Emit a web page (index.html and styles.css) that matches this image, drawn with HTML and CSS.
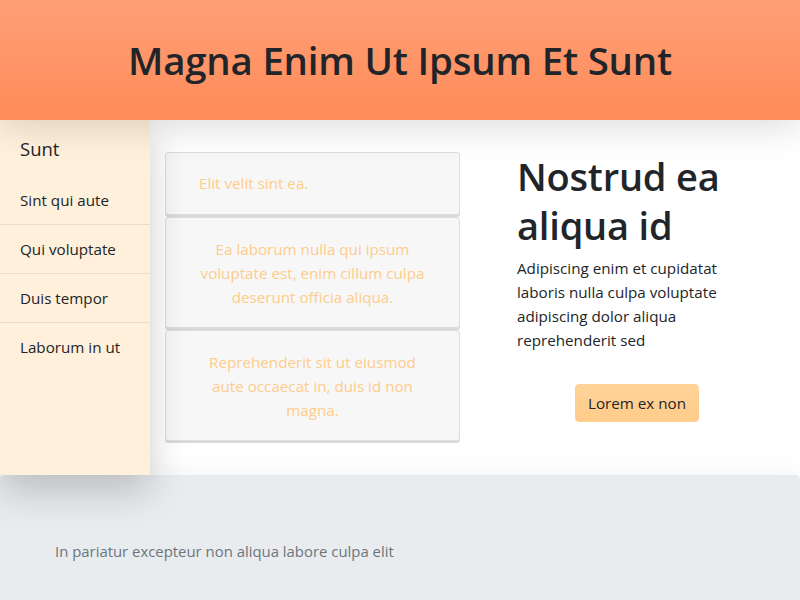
FILE: index.html
```html
<!DOCTYPE html>
<html lang="en">
<head>
<meta charset="utf-8">
<title>Magna Enim Ut Ipsum Et Sunt</title>
<link rel="stylesheet" href="styles.css">
</head>
<body>
<header class="top">
  <h1 class="top-title">Magna Enim Ut Ipsum Et Sunt</h1>
</header>
<div class="middle">
  <nav class="side">
    <div class="side-title">Sunt</div>
    <a class="side-item">Sint qui aute</a>
    <a class="side-item">Qui voluptate</a>
    <a class="side-item">Duis tempor</a>
    <a class="side-item">Laborum in ut</a>
  </nav>
  <main class="main">
    <div class="cards">
      <div class="card card-left">Elit velit sint ea.</div>
      <div class="card">Ea laborum nulla qui ipsum voluptate est, enim cillum culpa deserunt officia aliqua.</div>
      <div class="card">Reprehenderit sit ut eiusmod aute occaecat in, duis id non magna.</div>
    </div>
    <section class="hero">
      <h2 class="hero-title">Nostrud ea aliqua id</h2>
      <p class="hero-text">Adipiscing enim et cupidatat laboris nulla culpa voluptate adipiscing dolor aliqua reprehenderit sed</p>
      <div class="hero-actions"><button class="btn">Lorem ex non</button></div>
    </section>
  </main>
</div>
<footer class="foot">
  <p class="foot-text">In pariatur excepteur non aliqua labore culpa elit</p>
</footer>
</body>
</html>
```

FILE: styles.css
```css
html, body {
  margin: 0;
  padding: 0;
}
body {
  font-family: "Open Sans", "Liberation Sans", sans-serif;
  font-size: 15px;
  line-height: 24px;
  color: #212529;
  background: #ffffff;
  width: 800px;
  height: 600px;
  overflow: hidden;
}
.top {
  position: relative;
  z-index: 3;
  height: 120px;
  display: flex;
  align-items: center;
  justify-content: center;
  background: linear-gradient(180deg, #fe9f76 0%, #ff8b59 100%);
  box-shadow: 0 4px 36px rgba(0, 0, 0, 0.16);
}
.top-title {
  margin: 0;
  font-size: 38.4px;
  font-weight: 600;
  line-height: 48px;
  letter-spacing: -0.2px;
  color: #212529;
}
.middle {
  display: flex;
  height: 355px;
}
.side {
  position: relative;
  z-index: 2;
  width: 150px;
  flex: none;
  background: #fff0dc;
  box-shadow: 0 16px 36px rgba(0, 0, 0, 0.2);
  padding-top: 16px;
  box-sizing: border-box;
}
.side-title {
  font-size: 18.5px;
  line-height: 26px;
  padding: 0 20px;
  margin-bottom: 14px;
}
.side-item {
  display: block;
  padding: 12px 20px 12px;
  font-size: 15.2px;
  line-height: 24px;
  border-bottom: 1px solid #e6dccf;
  color: #212529;
}
.side-item:last-child {
  border-bottom: none;
}
.main {
  flex: 1;
  display: flex;
  background: #ffffff;
  padding: 32px 0 0 15px;
  box-sizing: border-box;
}
.cards {
  width: 295px;
  flex: none;
  display: flex;
  flex-direction: column;
  gap: 2px;
}
.card {
  background: #f7f7f7;
  border: 1px solid #dddddd;
  border-radius: 3px;
  box-shadow: 0 2px 0 #d9d9d9;
  padding: 19px 32px 18px;
  text-align: center;
  color: #fecc8b;
  font-size: 15.2px;
  line-height: 24px;
}
.card-left {
  text-align: left;
  padding: 18px 32px 19px 33px;
}
.hero {
  width: 240px;
  flex: none;
  padding: 0 0 0 57px;
}
.hero-title {
  margin: 0 0 6px;
  font-size: 38px;
  font-weight: 600;
  line-height: 49px;
  letter-spacing: -0.2px;
}
.hero-text {
  margin: 0;
  font-size: 15.2px;
  line-height: 24px;
}
.hero-actions {
  display: flex;
  justify-content: center;
  margin-top: 32px;
}
.btn {
  font-family: inherit;
  font-size: 15.2px;
  line-height: 24px;
  color: #212529;
  background: linear-gradient(180deg, #ffd398 0%, #ffcc8a 100%);
  border: 1px solid #fdcf93;
  border-radius: 4px;
  padding: 6px 12px;
}
.foot {
  position: relative;
  z-index: 1;
  height: 125px;
  background: #e9ecef;
  border-radius: 5px 5px 0 0;
  padding: 64px 55px 0;
  box-sizing: border-box;
  box-shadow: 0 -6px 20px rgba(0, 0, 0, 0.04);
}
.foot-text {
  margin: 0;
  font-size: 14.9px;
  line-height: 24px;
  color: #6c757d;
}
```
